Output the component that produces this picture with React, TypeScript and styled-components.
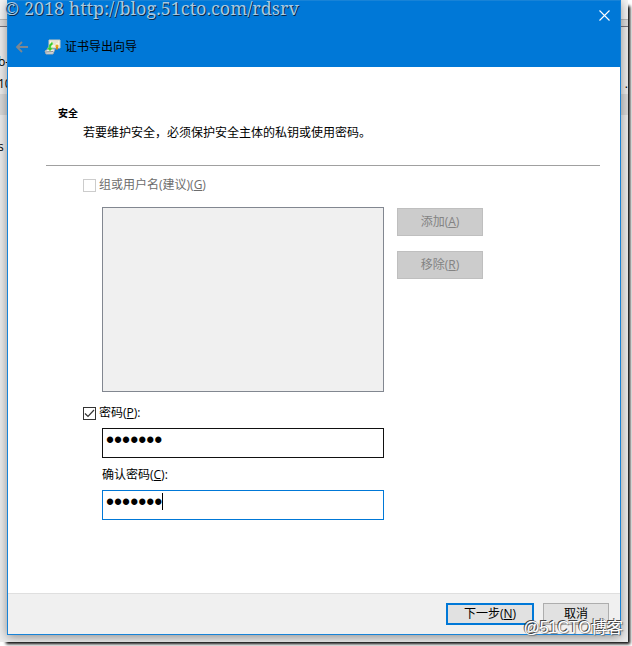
import React, { useState } from "react";
import styled, { createGlobalStyle } from "styled-components";

const Global = createGlobalStyle`
  * { box-sizing: border-box; }
  html, body, #root { height: 100%; }
  body {
    margin: 0;
    overflow: hidden;
    background: #ffffff;
    color: #000000;
    font: 12px/16px "Open Sans", "Noto Sans CJK SC", sans-serif;
  }
  button, input { font: inherit; }
`;

const Desktop = styled.div`
  position: relative;
  height: 100vh;
  padding: 0 4px 4px 0;
`;

const Backdrop = styled.div`
  position: relative;
  display: flex;
  height: 100%;
  padding: 0 7px 7px;
  overflow: hidden;
  background: linear-gradient(#f5f5f5 0 19px, #bdbdbd 19px 20px, #dedede 20px 26px, #77757f 26px 27px, #ededed 27px 94px, #dadada 94px 115px, #ededed 115px);
`;

const Shade = styled.div`
  position: absolute;
  inset: 6px 4px 4px 6px;
  box-shadow: 1px 1px 3px 1px #000000;
`;

const Behind = styled.span<{ $top: number; $right?: boolean }>`
  position: absolute;
  top: ${(p) => p.$top}px;
  ${(p) => (p.$right ? "right: 0;" : "left: -2px;")}
  white-space: nowrap;
`;

const Dialog = styled.main`
  position: relative;
  display: flex;
  flex: 1;
  flex-direction: column;
  border: 1px solid #1883d7;
  background: #ffffff;
  box-shadow: 0 2px 10px rgba(0, 0, 0, 0.4);
`;

const Header = styled.header`
  display: grid;
  grid-template-rows: 28px 38px;
  background: #0078d7;
`;

const CloseButton = styled.button`
  display: grid;
  place-items: center;
  justify-self: end;
  width: 32px;
  height: 28px;
  padding: 0;
  border: 0;
  background: none;
`;

const TitleRow = styled.div`
  display: flex;
  align-items: center;
  padding: 0 0 2px 7px;
`;

const BackButton = styled.button`
  display: grid;
  width: 16px;
  padding: 0;
  border: 0;
  background: none;
`;

const WizardIcon = styled.svg`
  margin: 0 4px 0 13px;
`;

const Title = styled.h1`
  margin: 0;
  font-size: 12px;
  font-weight: 400;
`;

const Content = styled.section`
  flex: 1;
  padding: 37px 20px 0 38px;
`;

const Heading = styled.h2`
  margin: 0 0 0 12px;
  font-size: 10px;
  font-weight: 700;
  line-height: 18px;
`;

const Intro = styled.p`
  margin: 2px 0 23px 37px;
  line-height: 18px;
`;

const Rule = styled.hr`
  height: 1px;
  margin: 0 0 11px;
  border: 0;
  background: #a0a0a0;
`;

const Form = styled.form`
  display: flex;
  flex-direction: column;
  padding-left: 37px;
`;

const CheckRow = styled.label<{ $muted?: boolean }>`
  display: flex;
  gap: 3px;
  align-self: flex-start;
  color: ${(p) => (p.$muted ? "#6d6d6d" : "#000000")};
`;

const Check = styled.input`
  appearance: none;
  width: 13px;
  height: 13px;
  margin: 2px 0 0;
  border: 1px solid #333333;
  background: #ffffff;
  &:disabled { border-color: #cccccc; }
  &:checked {
    background: url("data:image/svg+xml,%3Csvg xmlns='http://www.w3.org/2000/svg' viewBox='0 0 11 11'%3E%3Cpath d='M1 5.5 4 8.5 10 2' fill='none' stroke='%23333' stroke-width='1.2'/%3E%3C/svg%3E");
  }
`;

const Principals = styled.div`
  display: flex;
  gap: 13px;
  margin: 14px 0 13px 19px;
`;

const ListBox = styled.div`
  flex: 0 1 282px;
  height: 185px;
  border: 1px solid #828790;
  background: #f0f0f0;
`;

const SideButtons = styled.div`
  display: flex;
  flex-direction: column;
  gap: 15px;
  padding-top: 1px;
`;

const Button = styled.button<{ $primary?: boolean; $width: number; $height: number }>`
  width: ${(p) => p.$width}px;
  height: ${(p) => p.$height}px;
  padding: 0;
  border: ${(p) => (p.$primary ? "2px solid #0078d7" : "1px solid #adadad")};
  background: #e1e1e1;
  color: #000000;
  &:disabled {
    border-color: #bfbfbf;
    background: #cccccc;
    color: #838383;
  }
`;

const Field = styled.div`
  position: relative;
  flex: 0 0 30px;
  width: 282px;
  margin-left: 19px;
`;

const PasswordInput = styled.input<{ $active?: boolean }>`
  display: block;
  width: 100%;
  height: 30px;
  padding: 0 3px 6px;
  border: 1px solid ${(p) => (p.$active ? "#0078d7" : "#111111")};
  outline: 0;
  background: #ffffff;
  font: 23px "Liberation Sans", sans-serif;
`;

const Caret = styled.span`
  position: absolute;
  top: 3px;
  left: 60px;
  width: 1px;
  height: 17px;
  background: #000000;
`;

const PasswordRow = styled(CheckRow)`
  margin-bottom: 7px;
`;

const ConfirmLabel = styled.label`
  margin: 9px 0 7px 19px;
`;

const Footer = styled.footer`
  display: flex;
  justify-content: flex-end;
  gap: 9px;
  padding: 9px 11px;
  border-top: 1px solid #dfdfdf;
  background: #f0f0f0;
`;

const SiteMark = styled.div`
  position: absolute;
  top: 0;
  left: 4px;
  color: #a9c8e2;
  font: 18px/16px "Noto Serif", "DejaVu Serif", serif;
  text-shadow: 1px 1px 0 #0a2a48;
  white-space: nowrap;
`;

const BlogMark = styled.div`
  position: absolute;
  right: 9px;
  bottom: 8px;
  color: #ffffff;
  font: 16px/20px "Liberation Sans", "Noto Sans CJK SC", sans-serif;
  text-shadow: -1px -1px 0 #444444, 1px 1px 1px #777777;
`;

export default function App() {
  const [usePassword, setUsePassword] = useState(true);
  const [password, setPassword] = useState("abcdefg");
  const [confirm, setConfirm] = useState("abcdefg");

  return (
    <Desktop>
      <Global />
      <Shade />
      <Backdrop>
        <Behind $top={54}>b-</Behind>
        <Behind $top={76}>10</Behind>
        <Behind $top={139}>s</Behind>
        <Behind $top={76} $right>.</Behind>
        <Dialog>
          <Header>
            <CloseButton aria-label="关闭">
              <svg width="11" height="11" viewBox="0 0 11 11">
                <path d="M.5.5 10.5 10.5M10.5.5.5 10.5" stroke="#fff" strokeWidth="1.1" />
              </svg>
            </CloseButton>
            <TitleRow>
              <BackButton aria-label="返回">
                <svg width="16" height="12" viewBox="0 0 16 12">
                  <path d="M7 1 2 6l5 5M2 6h11" fill="none" stroke="#7d8790" strokeWidth="1.8" />
                </svg>
              </BackButton>
              <WizardIcon width="17" height="16" viewBox="0 0 17 16">
                <path d="M5 1h11v8H5z" fill="#f6f3df" stroke="#c9c9bd" />
                <path d="M7 3h7M8 5h4" stroke="#d5d3c5" />
                <circle cx="13" cy="7" r="1.6" fill="#e8a51e" />
                <path d="M12 8v3l1-1 1 1V8" fill="#d48b18" />
                <path d="m1 12 3-2h7l-2 5H2z" fill="#e8eaec" stroke="#a2a9ad" />
                <path d="m2 13 7-.3" stroke="#777f83" />
                <path d="M8 3 5 6v3H3l3 3 3-3H7V7l2-2z" fill="#39c832" stroke="#8eea72" strokeWidth=".5" />
              </WizardIcon>
              <Title>证书导出向导</Title>
            </TitleRow>
          </Header>
          <Content>
            <Heading>安全</Heading>
            <Intro>若要维护安全，必须保护安全主体的私钥或使用密码。</Intro>
            <Rule />
            <Form id="export-form" onSubmit={(e) => e.preventDefault()}>
              <CheckRow $muted>
                <Check type="checkbox" disabled />
                <span>组或用户名(建议)(<u>G</u>)</span>
              </CheckRow>
              <Principals>
                <ListBox role="listbox" aria-label="组或用户名" aria-disabled="true" />
                <SideButtons>
                  <Button type="button" disabled $width={86} $height={28}>添加(<u>A</u>)</Button>
                  <Button type="button" disabled $width={86} $height={28}>移除(<u>R</u>)</Button>
                </SideButtons>
              </Principals>
              <PasswordRow>
                <Check type="checkbox" checked={usePassword} onChange={(e) => setUsePassword(e.target.checked)} />
                <span>密码(<u>P</u>):</span>
              </PasswordRow>
              <Field>
                <PasswordInput type="password" aria-label="密码" value={password} onChange={(e) => setPassword(e.target.value)} />
              </Field>
              <ConfirmLabel htmlFor="confirm">确认密码(<u>C</u>):</ConfirmLabel>
              <Field>
                <PasswordInput id="confirm" type="password" $active value={confirm} onChange={(e) => setConfirm(e.target.value)} />
                <Caret />
              </Field>
            </Form>
          </Content>
          <Footer>
            <Button form="export-form" $primary $width={88} $height={22}>下一步(<u>N</u>)</Button>
            <Button type="button" $width={66} $height={22}>取消</Button>
          </Footer>
        </Dialog>
      </Backdrop>
      <SiteMark>© 2018 http://blog.51cto.com/rdsrv</SiteMark>
      <BlogMark>@51CTO博客</BlogMark>
    </Desktop>
  );
}
